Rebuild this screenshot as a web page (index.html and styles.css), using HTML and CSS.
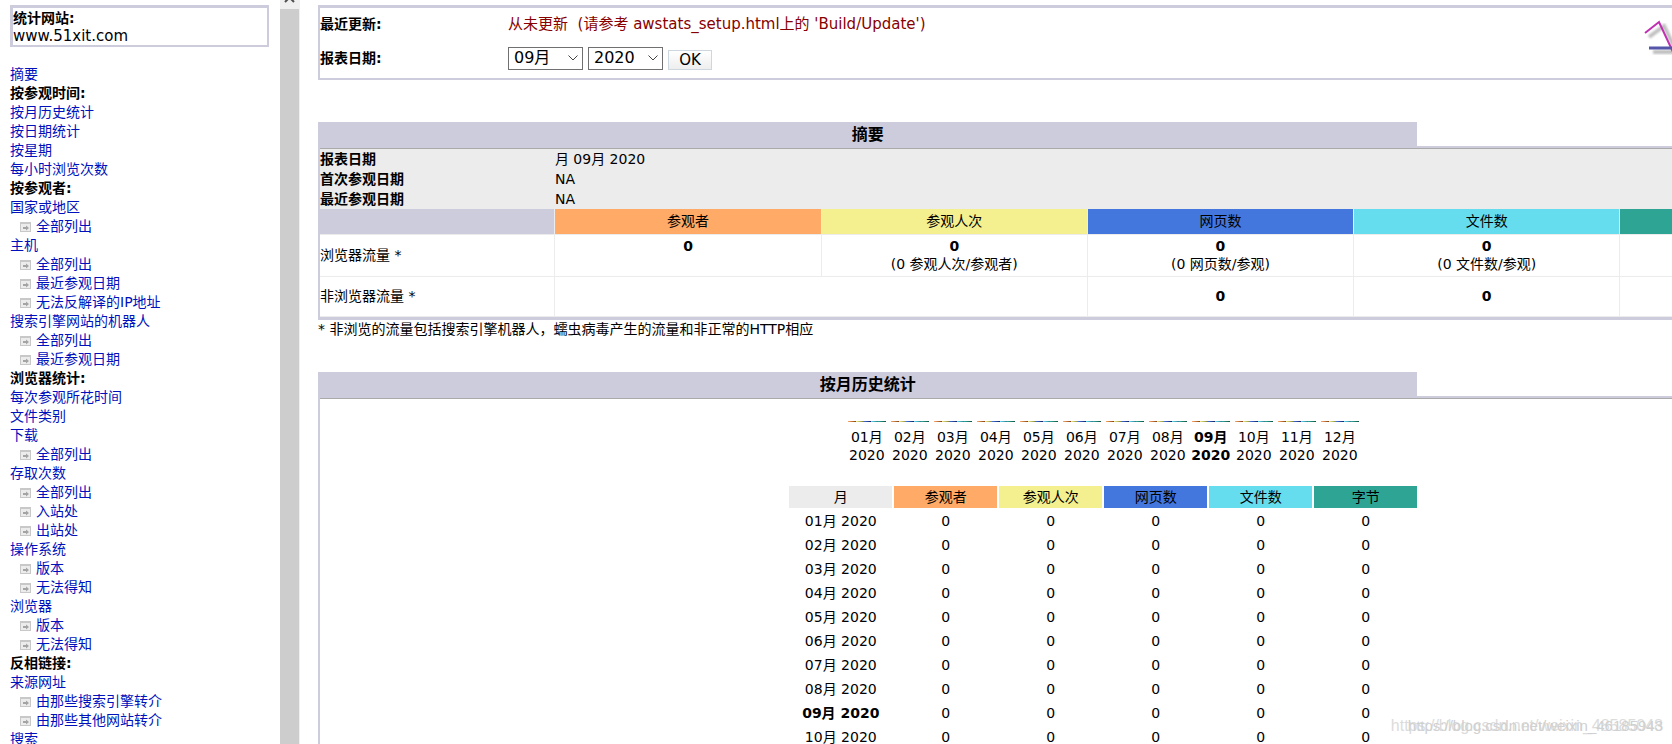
FILE: index.html
```
<!DOCTYPE html>
<html lang="zh-CN">
<head>
<meta charset="utf-8">
<title>统计网站 www.51xit.com</title>
<link rel="stylesheet" href="styles.css">
</head>
<body>
<svg class="defs" aria-hidden="true">
  <symbol id="page" viewBox="0 0 11 10">
    <rect x="0" y="0" width="11" height="10" fill="#c8c8c8"/>
    <rect x="1" y="2" width="9" height="7" fill="#ececec"/>
    <path d="M3 5h3V3.500L9 6 6 8.500V7H3z" fill="#a4a4a4"/>
  </symbol>
</svg>
<div class="frames">
  <aside class="side">
    <div class="site"><b>统计网站:</b><span class="host">www.51xit.com</span></div>
    <nav class="menu">
      <a href="#summary">摘要</a>
      <b>按参观时间:</b>
      <a href="#month">按月历史统计</a>
      <a href="#">按日期统计</a>
      <a href="#">按星期</a>
      <a href="#">每小时浏览次数</a>
      <b>按参观者:</b>
      <a href="#">国家或地区</a>
      <a class="sub" href="#"><svg><use href="#page"/></svg>全部列出</a>
      <a href="#">主机</a>
      <a class="sub" href="#"><svg><use href="#page"/></svg>全部列出</a>
      <a class="sub" href="#"><svg><use href="#page"/></svg>最近参观日期</a>
      <a class="sub" href="#"><svg><use href="#page"/></svg>无法反解译的IP地址</a>
      <a href="#">搜索引擎网站的机器人</a>
      <a class="sub" href="#"><svg><use href="#page"/></svg>全部列出</a>
      <a class="sub" href="#"><svg><use href="#page"/></svg>最近参观日期</a>
      <b>浏览器统计:</b>
      <a href="#">每次参观所花时间</a>
      <a href="#">文件类别</a>
      <a href="#">下载</a>
      <a class="sub" href="#"><svg><use href="#page"/></svg>全部列出</a>
      <a href="#">存取次数</a>
      <a class="sub" href="#"><svg><use href="#page"/></svg>全部列出</a>
      <a class="sub" href="#"><svg><use href="#page"/></svg>入站处</a>
      <a class="sub" href="#"><svg><use href="#page"/></svg>出站处</a>
      <a href="#">操作系统</a>
      <a class="sub" href="#"><svg><use href="#page"/></svg>版本</a>
      <a class="sub" href="#"><svg><use href="#page"/></svg>无法得知</a>
      <a href="#">浏览器</a>
      <a class="sub" href="#"><svg><use href="#page"/></svg>版本</a>
      <a class="sub" href="#"><svg><use href="#page"/></svg>无法得知</a>
      <b>反相链接:</b>
      <a href="#">来源网址</a>
      <a class="sub" href="#"><svg><use href="#page"/></svg>由那些搜索引擎转介</a>
      <a class="sub" href="#"><svg><use href="#page"/></svg>由那些其他网站转介</a>
      <a href="#">搜索</a>
    </nav>
  </aside>
  <div class="scroll" aria-hidden="true">
    <svg class="up" viewBox="0 0 19 9"><path d="M5 2l4.500-4.500L14 2" fill="none" stroke="#505050" stroke-width="2"/></svg>
    <div class="thumb"></div>
  </div>
  <main class="main">
    <div class="report">
      <form class="head">
        <div class="fields">
          <b>最近更新:</b>
          <span class="never">从未更新&nbsp; (请参考 awstats_setup.html上的 'Build/Update')</span>
          <b>报表日期:</b>
          <div class="pick">
            <span class="drop"><select aria-label="月"><option>09月</option></select><svg viewBox="0 0 10 6"><path d="M.5.5L5 5 9.500.5" fill="none" stroke="#444"/></svg></span>
            <span class="drop"><select aria-label="年"><option>2020</option></select><svg viewBox="0 0 10 6"><path d="M.5.5L5 5 9.500.5" fill="none" stroke="#444"/></svg></span>
            <button type="button">OK</button>
          </div>
        </div>
        <svg class="logo" viewBox="0 0 96 40">
          <defs><filter id="soft"><feGaussianBlur stdDeviation="1"/></filter></defs>
          <g fill="none" stroke="#000" stroke-width="4" opacity=".25" filter="url(#soft)"><path d="M5 19L20 8l12 25"/><path d="M9 34h80"/></g>
          <path d="M1 15L15 4l14 30" fill="none" stroke="#c030b0" stroke-width="2"/>
          <path d="M5 30h84" stroke="#5555aa" stroke-width="3"/>
        </svg>
      </form>

      <section class="block" id="summary">
        <h2>摘要</h2>
        <div class="panel">
          <table class="sum">
            <colgroup><col class="c-label"><col><col><col><col><col></colgroup>
            <tbody class="info">
              <tr><th>报表日期</th><td colspan="5">月 09月 2020</td></tr>
              <tr><th>首次参观日期</th><td colspan="5">NA</td></tr>
              <tr><th>最近参观日期</th><td colspan="5">NA</td></tr>
            </tbody>
            <tbody class="data">
              <tr class="keys"><td class="lav"></td><th class="u">参观者</th><th class="v">参观人次</th><th class="p">网页数</th><th class="h">文件数</th><th class="k">字节</th></tr>
              <tr class="seen"><td class="name">浏览器流量 *</td><td><b>0</b><br>&nbsp;</td><td><b>0</b><br>(0 参观人次/参观者)</td><td><b>0</b><br>(0 网页数/参观)</td><td><b>0</b><br>(0 文件数/参观)</td><td><b>0</b><br>(0 字节/参观)</td></tr>
              <tr class="unseen"><td class="name">非浏览器流量 *</td><td colspan="2"></td><td><b>0</b></td><td><b>0</b></td><td><b>0</b></td></tr>
            </tbody>
          </table>
        </div>
        <p class="note">* 非浏览的流量包括搜索引擎机器人，蠕虫病毒产生的流量和非正常的HTTP相应</p>
      </section>

      <section class="block" id="month">
        <h2>按月历史统计</h2>
        <div class="panel history">
          <div class="bars">
            <div><i></i>01月<br>2020</div><div><i></i>02月<br>2020</div><div><i></i>03月<br>2020</div><div><i></i>04月<br>2020</div><div><i></i>05月<br>2020</div><div><i></i>06月<br>2020</div><div><i></i>07月<br>2020</div><div><i></i>08月<br>2020</div><div class="now"><i></i>09月<br>2020</div><div><i></i>10月<br>2020</div><div><i></i>11月<br>2020</div><div><i></i>12月<br>2020</div>
          </div>
          <table class="months">
            <thead><tr><th class="m">月</th><th class="u">参观者</th><th class="v">参观人次</th><th class="p">网页数</th><th class="h">文件数</th><th class="k">字节</th></tr></thead>
            <tbody>
              <tr><td>01月 2020</td><td>0</td><td>0</td><td>0</td><td>0</td><td>0</td></tr>
              <tr><td>02月 2020</td><td>0</td><td>0</td><td>0</td><td>0</td><td>0</td></tr>
              <tr><td>03月 2020</td><td>0</td><td>0</td><td>0</td><td>0</td><td>0</td></tr>
              <tr><td>04月 2020</td><td>0</td><td>0</td><td>0</td><td>0</td><td>0</td></tr>
              <tr><td>05月 2020</td><td>0</td><td>0</td><td>0</td><td>0</td><td>0</td></tr>
              <tr><td>06月 2020</td><td>0</td><td>0</td><td>0</td><td>0</td><td>0</td></tr>
              <tr><td>07月 2020</td><td>0</td><td>0</td><td>0</td><td>0</td><td>0</td></tr>
              <tr><td>08月 2020</td><td>0</td><td>0</td><td>0</td><td>0</td><td>0</td></tr>
              <tr><td><b>09月 2020</b></td><td>0</td><td>0</td><td>0</td><td>0</td><td>0</td></tr>
              <tr><td>10月 2020</td><td>0</td><td>0</td><td>0</td><td>0</td><td>0</td></tr>
            </tbody>
          </table>
        </div>
      </section>
    </div>
  </main>
</div>
<div class="mark">https://blog.csdn.net/weixin_48585048</div>
<div class="mark second">https://blog.csdn.net/weixin_46185943</div>
</body>
</html>
```
FILE: styles.css
```
* { box-sizing: border-box; }
html, body { height: 100%; }
body {
  margin: 0;
  overflow: hidden;
  background: #fff;
  color: #000;
  font: 14px/18px "DejaVu Sans", Verdana, "Noto Sans CJK SC", sans-serif;
}
.defs { display: none; }
a { color: #0011bb; text-decoration: none; }
table { border-collapse: collapse; }

.frames { display: grid; grid-template-columns: 280px 20px 1fr; height: 100vh; }
.side { overflow: hidden; padding: 5px 11px 0 10px; }
.site {
  display: flex;
  flex-direction: column;
  padding-top: 1px;
  border: solid #ccccdd;
  border-width: 3px 2px 2px 3px;
}
.host { font-size: 15px; }
.menu { display: flex; flex-direction: column; margin-top: 18px; line-height: 19px; }
.sub { display: flex; align-items: center; gap: 5px; padding-left: 10px; }
.sub svg { width: 11px; height: 10px; }

.scroll { display: flex; flex-direction: column; background: #f0f0f0; padding-right: 1px; }
.up { height: 9px; }
.thumb { flex: 1; background: #cdcdcd; }

.main { overflow: hidden; padding: 5px 0 0 18px; }
.report { width: 116%; }
.head {
  display: flex;
  justify-content: space-between;
  align-items: flex-start;
  height: 75px;
  border: solid #ccccdd;
  border-width: 3px 2px 2px;
}
.fields { display: grid; grid-template-columns: 188px auto; grid-template-rows: 32px 36px; align-items: center; }
.never { color: #880000; font-size: 15px; }
.pick { display: flex; align-items: center; gap: 5px; }
.drop { display: flex; position: relative; }
.drop svg { position: absolute; right: 5px; top: 8px; width: 10px; height: 6px; }
.drop select {
  appearance: none;
  width: 75px;
  height: 23px;
  padding: 0 0 0 5px;
  border: 1px solid #707070;
  border-radius: 0;
  background: #fff;
  color: #000;
  font: inherit;
  font-size: 16px;
}
.pick button {
  width: 44px;
  height: 20px;
  margin-top: 3px;
  padding: 0;
  border: 1px solid #ccd7e0;
  background: linear-gradient(#fff, #eee);
  color: #000;
  font: inherit;
  font-size: 15px;
  line-height: 18px;
}
.logo { width: 96px; height: 40px; margin: 10px 147px 0 0; }

.block { margin-top: 42px; }
h2 {
  width: 70%;
  height: 24px;
  margin: 0;
  background: #ccccdd;
  font-size: 16px;
  line-height: 26px;
  text-align: center;
}
.panel { border: solid #ccccdd; border-width: 2px 2px 3px; }
.panel::before { content: ""; display: block; height: 1px; background: #aaa; }
.sum { width: 100%; table-layout: fixed; }
.c-label { width: 15%; }
.sum td, .sum th { padding: 0; }
.info { background: #ececec; }
.info tr { height: 20px; }
.info th { text-align: left; }
.data td, .data th { border: solid #ececec; border-width: 0 1px 1px 0; text-align: center; }
.data .name { text-align: left; }
.keys { height: 25px; }
.keys th, .months th { font-weight: normal; }
.seen { height: 42px; }
.unseen { height: 40px; }
.lav { background: #ccccdd; }
.u { background: #ffaa66; }
.v { background: #f4f090; }
.p { background: #4477dd; }
.h { background: #66ddee; }
.k { background: #2ea495; }
.m { background: #ececec; }
.note { margin: 0; line-height: 18px; }
#month { margin-top: 34px; }

.history { display: flex; flex-direction: column; align-items: center; }
.history::before { width: 100%; }
.bars { display: grid; grid-template-columns: repeat(12, 38px); gap: 5px; margin-top: 22px; text-align: center; }
.bars div { display: flex; flex-direction: column; align-items: center; white-space: nowrap; }
.bars i {
  width: 38px;
  height: 1px;
  margin-bottom: 6px;
  background: linear-gradient(90deg, #ffaa66, #884411 20%, #f4f090 20%, #888833 40%, #4477dd 40%, #112266 60%, #66ddee 60%, #227788 80%, #2ea495 80%, #115544);
}
.now { font-weight: bold; }
.months { border-collapse: separate; border-spacing: 2px; margin-top: 20px; text-align: center; }
.months th, .months td { width: 103px; height: 22px; padding: 0; }

.mark {
  position: absolute;
  right: 9px;
  bottom: 8px;
  color: #dcdcdc;
  font: 16px/20px "Liberation Sans", Arial, sans-serif;
}
.second { color: #d0d0d0; font-size: 15px; }
```
